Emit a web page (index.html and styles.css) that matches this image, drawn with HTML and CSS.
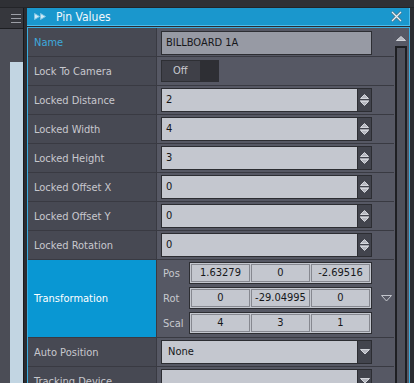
FILE: index.html
```html
<!DOCTYPE html>
<html lang="en">
<head>
  <meta charset="UTF-8" />
  <meta name="viewport" content="width=device-width, initial-scale=1" />
  <title>Pin Values</title>
  <link rel="stylesheet" href="styles.css">
</head>
<body>
<div class="screen">
  <div class="topband"></div>
  <div class="workspace">
    <aside class="side">
      <div class="side-head">
        <svg class="menu" width="10" height="9" viewBox="0 0 10 9">
          <path d="M0 0.5H10M0 4.5H10M0 8.5H10" stroke="#9c9ea6" stroke-width="1"/>
        </svg>
      </div>
      <div class="side-body"><div class="side-strip"></div></div>
    </aside>

    <section class="dialog">
      <header class="dialog-title">
        <svg class="title-icon" width="12" height="7" viewBox="0 0 12 7">
          <path d="M0.5 0.5L5.5 3.5L0.5 6.5Z M6.5 0.5L11.5 3.5L6.5 6.5Z" fill="#d3ebf6" stroke="#7fc6e6" stroke-width="1"/>
        </svg>
        <span class="title-text">Pin Values</span>
        <svg class="close" width="11" height="11" viewBox="0 0 11 11">
          <path d="M1 1L10 10M10 1L1 10" stroke="#5a6f7c" stroke-width="2.6"/>
          <path d="M1 1L10 10M10 1L1 10" stroke="#e4f3fa" stroke-width="1.2"/>
        </svg>
      </header>

      <div class="dialog-body">
        <div class="props">
          <div class="row">
            <div class="label label-active">Name</div>
            <div class="value"><div class="name-box">BILLBOARD 1A</div></div>
          </div>
          <div class="row">
            <div class="label">Lock To Camera</div>
            <div class="value">
              <div class="toggle"><span class="toggle-off">Off</span><span class="toggle-knob"></span></div>
            </div>
          </div>
          <div class="row">
            <div class="label">Locked Distance</div>
            <div class="value"><div class="field"><span class="field-text">2</span><span class="spin"></span></div></div>
          </div>
          <div class="row">
            <div class="label">Locked Width</div>
            <div class="value"><div class="field"><span class="field-text">4</span><span class="spin"></span></div></div>
          </div>
          <div class="row">
            <div class="label">Locked Height</div>
            <div class="value"><div class="field"><span class="field-text">3</span><span class="spin"></span></div></div>
          </div>
          <div class="row">
            <div class="label">Locked Offset X</div>
            <div class="value"><div class="field"><span class="field-text">0</span><span class="spin"></span></div></div>
          </div>
          <div class="row">
            <div class="label">Locked Offset Y</div>
            <div class="value"><div class="field"><span class="field-text">0</span><span class="spin"></span></div></div>
          </div>
          <div class="row">
            <div class="label">Locked Rotation</div>
            <div class="value"><div class="field"><span class="field-text">0</span><span class="spin"></span></div></div>
          </div>

          <div class="row row-tall">
            <div class="label label-selected">Transformation</div>
            <div class="value value-tf">
              <div class="tf-rows">
                <div class="tf-row">
                  <span class="tf-name">Pos</span>
                  <div class="tf-box"><span>1.63279</span><span>0</span><span>-2.69516</span></div>
                </div>
                <div class="tf-row">
                  <span class="tf-name">Rot</span>
                  <div class="tf-box"><span>0</span><span>-29.04995</span><span>0</span></div>
                </div>
                <div class="tf-row">
                  <span class="tf-name">Scal</span>
                  <div class="tf-box"><span>4</span><span>3</span><span>1</span></div>
                </div>
              </div>
              <svg class="tf-more" width="11" height="7" viewBox="0 0 11 7">
                <path d="M0.5 0.5H10.5L5.5 6Z" fill="none" stroke="#c3c5cc" stroke-width="1"/>
              </svg>
            </div>
          </div>

          <div class="row">
            <div class="label">Auto Position</div>
            <div class="value"><div class="field"><span class="field-text select-text">None</span><span class="drop"></span></div></div>
          </div>
          <div class="row">
            <div class="label">Tracking Device</div>
            <div class="value"><div class="field"><span class="field-text select-text"></span><span class="drop"></span></div></div>
          </div>
        </div>

        <div class="scrollbar">
          <svg class="scroll-up" width="10" height="5" viewBox="0 0 10 5">
            <path d="M0.5 4.5L5 0.5L9.5 4.5Z" fill="#b7b9c1" stroke="#d2d4da" stroke-width="1"/>
          </svg>
          <div class="thumb"></div>
        </div>
      </div>
    </section>
  </div>
</div>
</body>
</html>
```

FILE: styles.css
```css
* {
  box-sizing: border-box;
}
body {
  margin: 0;
  background: #2b2c31;
  font-family: "DejaVu Sans", "Liberation Sans", sans-serif;
  font-stretch: condensed;
  font-size: 11px;
}
.screen {
  width: 414px;
  height: 383px;
  overflow: hidden;
  display: flex;
  flex-direction: column;
  background: #2b2c31;
}
.topband {
  height: 8px;
  flex-shrink: 0;
  background: #2f3035;
  border-bottom: 1px solid #232428;
}
.workspace {
  flex: 1;
  min-height: 0;
  display: flex;
  overflow: hidden;
}

/* left docked panel */
.side {
  width: 24px;
  flex-shrink: 0;
  display: flex;
  flex-direction: column;
  border-right: 1px solid #18191c;
}
.side-head {
  height: 21px;
  flex-shrink: 0;
  background: #36373d;
  border-bottom: 1px solid #1d1e22;
  display: flex;
  align-items: center;
  justify-content: flex-end;
  padding-right: 2px;
}
.side-body {
  flex: 1;
  background: #4b4d56;
  padding: 33px 0 0 10px;
  display: flex;
}
.side-strip {
  flex: 1;
  background: #c2d5e2;
}

/* dialog */
.dialog {
  width: 383px;
  flex-shrink: 0;
  margin-left: 3px;
  display: flex;
  flex-direction: column;
}
.dialog-title {
  height: 18px;
  flex-shrink: 0;
  margin-bottom: 1px;
  background: #1a97cd;
  border-bottom: 1px solid #4cbdec;
  border-right: 1px solid #4cbdec;
  display: flex;
  align-items: center;
  color: #f2f8fb;
  font-size: 12px;
}
.title-icon {
  margin-left: 7px;
}
.title-text {
  margin-left: 10px;
  flex: 1;
}
.close {
  margin-right: 7px;
}
.dialog-body {
  flex: 1;
  display: flex;
  border: 1px solid #3aaddf;
  border-bottom: none;
  background: #565864;
}
.props {
  width: 366px;
  flex-shrink: 0;
}
.row {
  display: flex;
  height: 29px;
  border-bottom: 1px solid #393a42;
}
.row-tall {
  height: 78px;
}
.label {
  width: 129px;
  padding-left: 6px;
  display: flex;
  align-items: center;
  background: #474953;
  border-right: 1px solid #393a42;
  color: #c7c8ce;
  white-space: nowrap;
}
.label-active {
  color: #3ea9de;
}
.label-selected {
  background: #0997d3;
  color: #fff;
}
.value {
  flex: 1;
  display: flex;
  align-items: center;
  padding-left: 4px;
  background: #565864;
}

.name-box {
  width: 211px;
  height: 24px;
  margin-top: 2px;
  padding-left: 4px;
  line-height: 22px;
  background: #979aa4;
  border: 1px solid #2d2e33;
  color: #16171a;
}

.toggle {
  width: 58px;
  height: 22px;
  display: flex;
  background: #2e2f34;
  padding: 1px;
}
.toggle-off {
  width: 38px;
  background: #3f4048;
  color: #c9cad0;
  line-height: 20px;
  padding-left: 11px;
}
.toggle-knob {
  flex: 1;
}

.field {
  width: 211px;
  height: 24px;
  display: flex;
}
.field-text {
  flex: 1;
  background: #c4c7cf;
  border: 1px solid #2c2d32;
  padding-left: 4px;
  line-height: 22px;
  color: #141518;
}
.select-text {
  padding-left: 6px;
}
.spin,
.drop {
  width: 14px;
  background: #42444d;
  border: 1px solid #2c2d32;
  border-left: none;
  background-repeat: no-repeat;
  background-position: center;
}
.spin {
  background-image: url("data:image/svg+xml,%3Csvg xmlns='http://www.w3.org/2000/svg' width='9' height='12'%3E%3Cpath d='M0.5 4.5L4.5 0.5L8.5 4.5Z' fill='%23b6b8c0' stroke='%23d3d5db'/%3E%3Cpath d='M0 6.5H9' stroke='%23a4a6ae'/%3E%3Cpath d='M0.5 7.5H8.5L4.5 11.5Z' fill='%23b6b8c0' stroke='%23d3d5db'/%3E%3C/svg%3E");
}
.drop {
  background-image: url("data:image/svg+xml,%3Csvg xmlns='http://www.w3.org/2000/svg' width='10' height='6'%3E%3Cpath d='M0.5 0.5H9.5L5 5Z' fill='%23b6b8c0' stroke='%23d3d5db'/%3E%3C/svg%3E");
}

/* transformation block */
.value-tf {
  align-items: flex-start;
  padding-top: 2px;
}
.tf-rows {
  display: flex;
  flex-direction: column;
  gap: 3px;
}
.tf-row {
  display: flex;
  align-items: center;
}
.tf-name {
  width: 28px;
  padding-left: 2px;
  color: #c7c8ce;
}
.tf-box {
  width: 183px;
  height: 22px;
  display: grid;
  grid-template-columns: 1fr 1fr 1fr;
  gap: 1px;
  padding: 1px;
  background: #c4c7cf;
  border: 1px solid #2c2d32;
}
.tf-box span {
  border: 1px solid #868890;
  text-align: center;
  line-height: 16px;
  color: #16171a;
}
.tf-more {
  margin: 33px 0 0 9px;
}

/* scrollbar */
.scrollbar {
  width: 14px;
  display: flex;
  flex-direction: column;
  align-items: center;
  background: #575965;
}
.scroll-up {
  margin-top: 8px;
}
.thumb {
  flex: 1;
  width: 12px;
  margin-top: 5px;
  background: #4e505a;
  border: 2px solid #1e1f23;
  border-bottom: none;
}
```
